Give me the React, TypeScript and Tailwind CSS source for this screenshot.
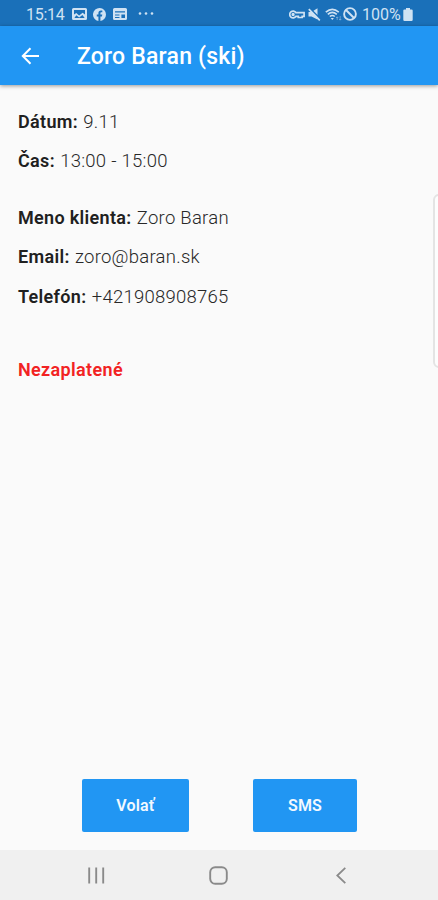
import type { ReactNode } from "react";

function StatusBar() {
  return (
    <div className="flex h-[26px] shrink-0 items-center bg-[#1a70b9] pt-[2px] pl-[26px] text-[#cfe2f3]">
      <span className="w-[39px] pt-px text-[16px] leading-[24px] tracking-[-0.3px] whitespace-nowrap">15:14</span>
      <svg className="ml-[7px]" width="15" height="12" viewBox="0 0 15 12">
        <path fill="currentColor" fillRule="evenodd" d="M1.500 0h12A1.500 1.500 0 0 1 15 1.500v9a1.500 1.500 0 0 1-1.500 1.500h-12A1.500 1.500 0 0 1 0 10.500v-9A1.500 1.500 0 0 1 1.500 0ZM2 2v4.500l2.300-1.400 2.800 2.400 3.500-2.800L13 6.500V2ZM2.400 10.100h10.300L10.400 7 7.200 9.400 4.300 7.300Z" />
      </svg>
      <svg className="ml-[6px]" width="13" height="13" viewBox="0 0 24 24">
        <path fill="currentColor" d="M24 12a12 12 0 1 0-14 11.900v-8.400H7V12h3V9.400c0-3 1.800-4.700 4.500-4.700 1.300 0 2.700.2 2.700.2v3h-1.500c-1.500 0-2 .9-2 1.900V12h3.400l-.6 3.500h-2.800v8.400A12 12 0 0 0 24 12Z" />
      </svg>
      <svg className="ml-[7px]" width="14" height="12" viewBox="0 0 14 12">
        <path fill="currentColor" fillRule="evenodd" d="M1.500 0h11A1.500 1.500 0 0 1 14 1.500v9a1.500 1.500 0 0 1-1.500 1.500h-11A1.500 1.500 0 0 1 0 10.500v-9A1.500 1.500 0 0 1 1.500 0ZM2 3.300v1.300h10V3.300ZM2 6.400v1h4.500v-1ZM2 8.900v1.200h4.500V8.900ZM8.400 6.600v3.400h3.600V6.600Z" />
      </svg>
      <svg className="ml-[11px]" width="16" height="4" viewBox="0 0 16 4" fill="currentColor">
        <circle cx="2" cy="1.500" r="1.300" />
        <circle cx="8" cy="1.500" r="1.300" />
        <circle cx="14" cy="1.500" r="1.300" />
      </svg>
      <svg className="ml-[135px]" width="16" height="9" viewBox="0 0 16 9" fill="none" stroke="currentColor" strokeWidth="1.700">
        <path d="M7 2.700A3.400 3.400 0 1 0 7 6.300h2.300v1.200h3.900V6.300h1.900V2.700Z" />
        <circle cx="4.100" cy="4.500" r=".8" />
      </svg>
      <svg className="ml-[3px]" width="13" height="13" viewBox="0 0 13 13">
        <path fill="currentColor" d="M.5 4h3L9.500.2v11.300L3.500 8.500h-3Z" />
        <path d="M1.400 0 13 11.500" stroke="#1a70b9" strokeWidth="1.600" />
        <path d="M.8 1.200 11.800 12.300" stroke="currentColor" strokeWidth="1.700" />
      </svg>
      <svg className="ml-[4px]" width="17" height="13" viewBox="0 0 17 13" fill="none" stroke="currentColor">
        <path d="M.8 4.200Q7.300-1.500 13.800 4.200M2.800 6.300Q7.300 2.500 11.800 6.300M4.800 8.500Q7.300 6.500 9.800 8.500" strokeWidth="1.600" />
        <path d="m5.700 10 1.600 2 1.600-2Z" fill="currentColor" stroke="none" />
        <path d="M12.200 12V9m-1.200 1 1.200-1.200L13.300 10M15.200 8v4m-1.100-1 1.100 1.200 1.100-1.200" strokeWidth=".8" opacity=".5" />
      </svg>
      <svg className="ml-[1px]" width="14" height="14" viewBox="0 0 14 14" fill="none" stroke="currentColor" strokeWidth="1.900">
        <circle cx="7" cy="7" r="5.900" />
        <path d="m3 3 8 8" />
      </svg>
      <span className="ml-[5px] w-[39px] pt-px text-[16px] leading-[24px] whitespace-nowrap">100%</span>
      <svg className="ml-[2px]" width="10" height="13" viewBox="0 0 10 13">
        <path fill="currentColor" d="M3 0h4v1.400h1.500A1.200 1.200 0 0 1 9.700 2.600v9.200A1.200 1.200 0 0 1 8.500 13h-7A1.200 1.200 0 0 1 .3 11.800V2.600a1.200 1.200 0 0 1 1.200-1.200H3Z" />
      </svg>
    </div>
  );
}

function AppBar() {
  return (
    <header className="z-10 flex h-[59px] shrink-0 items-center bg-[#2196f3] pl-[21px] text-white shadow-[0_1px_4px_rgba(0,0,0,0.4)]">
      <svg width="19" height="18" viewBox="0 0 19 18" fill="none" stroke="currentColor" strokeWidth="2">
        <path d="M18 9H2M9.500 1.300 1.800 9l7.700 7.700" />
      </svg>
      <h1 className="ml-[37px] pt-[2px] text-[23px] leading-[30px] font-medium tracking-[0.2px] whitespace-nowrap">Zoro Baran (ski)</h1>
    </header>
  );
}

function Field({ label, children }: { label: string; children: ReactNode }) {
  return (
    <p className="h-[22px] text-[18px] leading-[22px] whitespace-nowrap">
      <span className="font-semibold tracking-[0.32px] text-[#202020]">{label}</span>{" "}
      <span className="ml-[0.800px] text-[18.500px] font-light tracking-[0.26px] text-[#282828]">{children}</span>
    </p>
  );
}

export default function App() {
  return (
    <div className="relative flex h-[900px] w-[438px] flex-col overflow-hidden bg-[#fafafa] font-[Roboto,sans-serif]">
      <StatusBar />
      <AppBar />
      <main className="flex grow flex-col pt-[26px] pl-[18px]">
        <div className="flex flex-col gap-[17px]">
          <Field label="Dátum:">9.11</Field>
          <Field label="Čas:">13:00 - 15:00</Field>
        </div>
        <div className="mt-[35px] flex flex-col gap-[17.400px]">
          <Field label="Meno klienta:">Zoro Baran</Field>
          <Field label="Email:">zoro@baran.sk</Field>
          <Field label="Telefón:">+421908908765</Field>
        </div>
        <p className="mt-[51px] text-[18px] leading-[22px] font-semibold tracking-[0.35px] text-[#f22222]">Nezaplatené</p>
      </main>
      <div className="flex h-[71px] shrink-0 pl-[82px] text-[16px] font-semibold tracking-[0.2px] text-[#f2f9ff]">
        <button className="h-[53px] w-[107px] rounded-[2px] bg-[#2196f3]">Volať</button>
        <button className="ml-[64px] h-[53px] w-[104px] rounded-[2px] bg-[#2196f3]">SMS</button>
      </div>
      <nav className="flex h-[50px] shrink-0 items-center bg-[#f0f0f0] pt-[1px] pl-[88px] text-[#8a8a8a]">
        <svg width="17" height="17" viewBox="0 0 17 17" stroke="currentColor" strokeWidth="1.900">
          <path d="M1.200 .5v16M8.200 .5v16M15.200 .5v16" />
        </svg>
        <svg className="ml-[104px]" width="19" height="19" viewBox="0 0 19 19" fill="none" stroke="currentColor" strokeWidth="1.900">
          <rect x="1.200" y="1.200" width="16.600" height="16.600" rx="5" />
        </svg>
        <svg className="ml-[108px]" width="11" height="17" viewBox="0 0 11 17" fill="none" stroke="currentColor" strokeWidth="1.800">
          <path d="M9.300 .8 1.300 8.500l8 7.700" />
        </svg>
      </nav>
      <div className="absolute top-[194px] left-[433px] h-[174px] w-[12px] rounded-[6px] border-2 border-[#e4e4e4] bg-[#fdfdfd]" />
    </div>
  );
}
